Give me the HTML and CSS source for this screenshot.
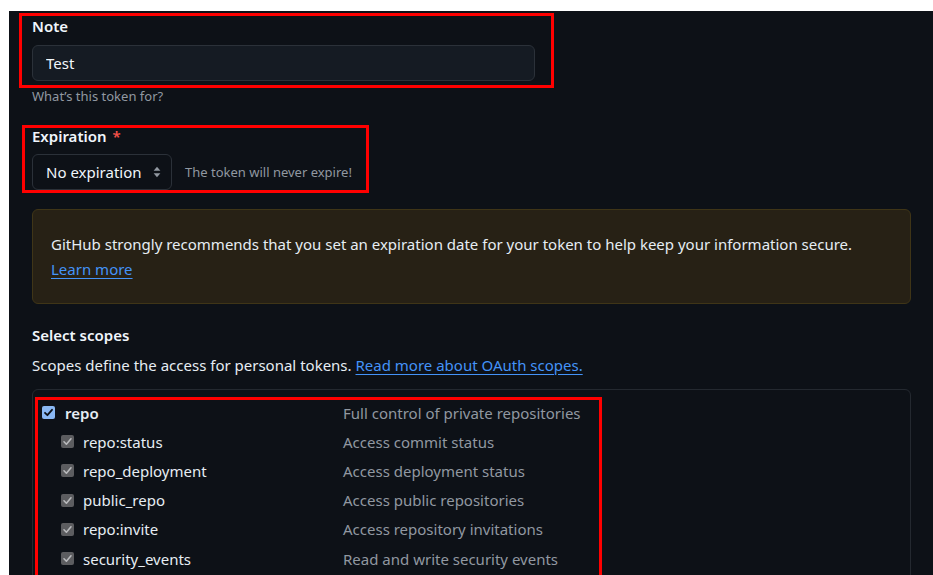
FILE: index.html
```html
<!DOCTYPE html>
<html lang="en">
<head>
<meta charset="utf-8">
<title>New personal access token</title>
<link rel="stylesheet" href="styles.css">
</head>
<body>
<main class="page">
  <div class="form-group note-group">
    <label class="label" for="note">Note</label>
    <input id="note" class="text-input" type="text" value="Test">
    <p class="hint">What’s this token for?</p>
  </div>

  <div class="form-group expiry-group">
    <label class="label">Expiration <span class="required">*</span></label>
    <div class="expiry-row">
      <div class="select">
        <span>No expiration</span>
        <svg class="select-arrows" width="8" height="12" viewBox="0 0 8 12" aria-hidden="true">
          <path d="M4 0.8 L7.4 4.8 H0.6 Z" fill="#9198a1"/>
          <path d="M4 11.2 L7.4 7.2 H0.6 Z" fill="#9198a1"/>
        </svg>
      </div>
      <span class="expiry-note">The token will never expire!</span>
    </div>
  </div>

  <div class="flash-warn">
    <p>GitHub strongly recommends that you set an expiration date for your token to help keep your information secure.</p>
    <p><a class="link" href="#">Learn more</a></p>
  </div>

  <h3 class="section-title">Select scopes</h3>
  <p class="section-desc">Scopes define the access for personal tokens. <a class="link" href="#">Read more about OAuth scopes.</a></p>

  <div class="scopes">
    <div class="scope parent">
      <div class="scope-name">
        <svg class="cb" width="13" height="13" viewBox="0 0 13 13" aria-hidden="true">
          <rect x="0" y="0" width="13" height="13" rx="2" fill="#8ab8f4"/>
          <path d="M3 6.8 L5.4 9.2 L10 3.8" fill="none" stroke="#0d1117" stroke-width="1.8" stroke-linecap="round" stroke-linejoin="round"/>
        </svg>
        <span>repo</span>
      </div>
      <div class="scope-desc">Full control of private repositories</div>
    </div>
    <div class="scope child">
      <div class="scope-name">
        <svg class="cb" width="13" height="13" viewBox="0 0 13 13" aria-hidden="true">
          <rect x="0" y="0" width="13" height="13" rx="2" fill="#5c5d60"/>
          <path d="M3 6.8 L5.4 9.2 L10 3.8" fill="none" stroke="#b9babd" stroke-width="1.6" stroke-linecap="round" stroke-linejoin="round"/>
        </svg>
        <span>repo:status</span>
      </div>
      <div class="scope-desc">Access commit status</div>
    </div>
    <div class="scope child">
      <div class="scope-name">
        <svg class="cb" width="13" height="13" viewBox="0 0 13 13" aria-hidden="true">
          <rect x="0" y="0" width="13" height="13" rx="2" fill="#5c5d60"/>
          <path d="M3 6.8 L5.4 9.2 L10 3.8" fill="none" stroke="#b9babd" stroke-width="1.6" stroke-linecap="round" stroke-linejoin="round"/>
        </svg>
        <span>repo_deployment</span>
      </div>
      <div class="scope-desc">Access deployment status</div>
    </div>
    <div class="scope child">
      <div class="scope-name">
        <svg class="cb" width="13" height="13" viewBox="0 0 13 13" aria-hidden="true">
          <rect x="0" y="0" width="13" height="13" rx="2" fill="#5c5d60"/>
          <path d="M3 6.8 L5.4 9.2 L10 3.8" fill="none" stroke="#b9babd" stroke-width="1.6" stroke-linecap="round" stroke-linejoin="round"/>
        </svg>
        <span>public_repo</span>
      </div>
      <div class="scope-desc">Access public repositories</div>
    </div>
    <div class="scope child">
      <div class="scope-name">
        <svg class="cb" width="13" height="13" viewBox="0 0 13 13" aria-hidden="true">
          <rect x="0" y="0" width="13" height="13" rx="2" fill="#5c5d60"/>
          <path d="M3 6.8 L5.4 9.2 L10 3.8" fill="none" stroke="#b9babd" stroke-width="1.6" stroke-linecap="round" stroke-linejoin="round"/>
        </svg>
        <span>repo:invite</span>
      </div>
      <div class="scope-desc">Access repository invitations</div>
    </div>
    <div class="scope child">
      <div class="scope-name">
        <svg class="cb" width="13" height="13" viewBox="0 0 13 13" aria-hidden="true">
          <rect x="0" y="0" width="13" height="13" rx="2" fill="#5c5d60"/>
          <path d="M3 6.8 L5.4 9.2 L10 3.8" fill="none" stroke="#b9babd" stroke-width="1.6" stroke-linecap="round" stroke-linejoin="round"/>
        </svg>
        <span>security_events</span>
      </div>
      <div class="scope-desc">Read and write security events</div>
    </div>
  </div>

  <!-- red highlight frames drawn over the form -->
  <div class="mark mark-note"></div>
  <div class="mark mark-expiry"></div>
  <div class="mark mark-scopes"></div>
</main>
</body>
</html>
```

FILE: styles.css
```css
* { box-sizing: border-box; }

html, body {
  margin: 0;
  padding: 0;
  height: 100%;
  background: #ffffff;
  overflow: hidden;
}

.page {
  position: relative;
  margin: 11px 0 0 9px;
  height: calc(100vh - 11px);
  overflow: hidden;
  background: #0d1117;
  padding: 5px 22px 0 23px;
  font-family: "Noto Sans", "Open Sans", sans-serif;
  font-size: 15px;
  color: #e6edf3;
}

p { margin: 0; }

.label {
  display: block;
  font-weight: 600;
  font-size: 15px;
  line-height: 20px;
  color: #f0f6fc;
}

.required { color: #f85149; margin-left: 2px; }

.text-input {
  display: block;
  margin-top: 9px;
  width: 503px;
  height: 36px;
  padding: 0 13px;
  background: #151b23;
  border: 1px solid #2b3139;
  border-radius: 6px;
  color: #f0f6fc;
  font: inherit;
  font-size: 15px;
  outline: none;
}

.hint {
  margin-top: 6px;
  font-size: 13px;
  line-height: 18px;
  color: #9198a1;
}

.expiry-group { margin-top: 21px; }

.expiry-row {
  display: flex;
  align-items: center;
  gap: 13px;
  margin-top: 8px;
}

.select {
  display: flex;
  align-items: center;
  justify-content: space-between;
  width: 140px;
  height: 36px;
  padding: 0 10px 0 13px;
  border: 1px solid #2b3139;
  border-radius: 6px;
  background: #0d1117;
  color: #f0f6fc;
  font-size: 15px;
}

.select-arrows { display: block; }

.expiry-note {
  font-size: 13px;
  color: #9198a1;
}

.flash-warn {
  margin-top: 19px;
  padding: 22px 18px 21px;
  background: #272115;
  border: 1px solid #3f3517;
  border-radius: 6px;
  line-height: 25px;
  color: #e6edf3;
}

.link {
  color: #4493f8;
  text-decoration: underline;
  text-underline-offset: 3px;
}

.section-title {
  margin: 21px 0 0;
  font-size: 15px;
  font-weight: 600;
  line-height: 20px;
  color: #f0f6fc;
}

.section-desc {
  margin-top: 10px;
  line-height: 20px;
}

.scopes {
  margin-top: 14px;
  border: 1px solid #242930;
  border-radius: 6px;
  padding-top: 8px;
  height: 220px;
}

.scope {
  display: grid;
  grid-template-columns: 301px 1fr;
  align-items: center;
  height: 29.2px;
  padding-left: 9px;
}

.scope-name {
  display: flex;
  align-items: center;
  gap: 10px;
  color: #e6edf3;
}

.parent .scope-name { font-weight: 600; }

.child .scope-name { padding-left: 19px; gap: 9px; }

.cb { display: block; flex: none; }

.scope-desc { color: #9198a1; }

/* highlight frames */
.mark {
  position: absolute;
  border: 3px solid #ff0000;
  pointer-events: none;
}

.mark-note   { left: 10px; top: 2px;   width: 535px; height: 75px; }
.mark-expiry { left: 13px; top: 114px; width: 347px; height: 68px; }
.mark-scopes { left: 26px; top: 386px; width: 567px; height: 200px; }
```
